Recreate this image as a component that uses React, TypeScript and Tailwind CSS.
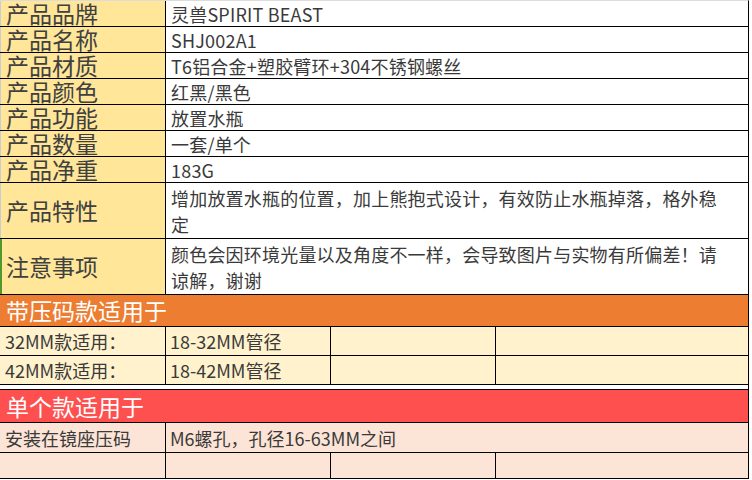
import React from 'react';

const info: [string, React.ReactNode, string][] = [
  ['产品品牌', '灵兽SPIRIT BEAST', 'h-[26px]'],
  ['产品名称', 'SHJ002A1', 'h-[26px]'],
  ['产品材质', 'T6铝合金+塑胶臂环+304不锈钢螺丝', 'h-[26px]'],
  ['产品颜色', '红黑/黑色', 'h-[26px]'],
  ['产品功能', '放置水瓶', 'h-[26px]'],
  ['产品数量', '一套/单个', 'h-[26px]'],
  ['产品净重', '183G', 'h-[26px]'],
  [
    '产品特性',
    <>增加放置水瓶的位置，加上熊抱式设计，有效防止水瓶掉落，格外稳<br />定</>,
    'h-[56px]',
  ],
];

function SubRow({ a, b, h, bg, merged }: { a: string; b: string; h: string; bg: string; merged?: boolean }) {
  return (
    <div className={`flex ${h} ${bg} border-b border-black text-[18px] leading-none text-[#3a3a3a]`}>
      <div className="w-[166px] shrink-0 border-r border-black flex items-center pl-[5px]">{a}</div>
      {merged ? (
        <div className="flex-1 flex items-center pl-[4px]">{b}</div>
      ) : (
        <>
          <div className="w-[165px] shrink-0 border-r border-black flex items-center pl-[4px]">{b}</div>
          <div className="w-[165px] shrink-0 border-r border-black" />
          <div className="flex-1" />
        </>
      )}
    </div>
  );
}

export default function App() {
  return (
    <div className="w-[752px] h-[480px] bg-white overflow-hidden font-['Noto_Sans_CJK_SC','Noto_Sans',sans-serif]">
      <div className="w-[749px] border-t border-t-[#dcdcdc] border-r border-r-black">
        {info.map(([label, value, h]) => (
          <div key={label} className={`flex ${h} border-b border-black`}>
            <div className="w-[166px] shrink-0 bg-[#ffe699] border-l border-l-[#c8ccd4] border-r border-r-black flex items-center pl-[5px] text-[23px] leading-none text-[#404040]">
              {label}
            </div>
            <div className="flex-1 flex items-center pl-[5px] text-[18px] leading-[26px] tracking-[0.2px] text-[#3a3a3a]">{value}</div>
          </div>
        ))}
        <div className="flex h-[56px] border-b border-black">
          <div className="w-[166px] shrink-0 bg-[#ffe699] border-l-2 border-l-[#4f9a2a] border-r border-r-black flex items-center pl-[4px] text-[23px] leading-none text-[#404040]">
            注意事项
          </div>
          <div className="flex-1 flex items-center pl-[5px] text-[18px] leading-[26px] tracking-[0.2px] text-[#3a3a3a]">
            <span>
              颜色会因环境光量以及角度不一样，会导致图片与实物有所偏差！请
              <br />
              谅解，谢谢
            </span>
          </div>
        </div>

        <div className="h-[32px] bg-[#ed7d31] border-b border-black flex items-center pl-[6px] text-[23px] leading-none text-white">
          带压码款适用于
        </div>
        <SubRow a="32MM款适用：" b="18-32MM管径" h="h-[29px]" bg="bg-[#fff2cc]" />
        <SubRow a="42MM款适用：" b="18-42MM管径" h="h-[29px]" bg="bg-[#fff2cc]" />

        <div className="h-[4px] bg-white" />

        <div className="h-[34px] bg-[#ff5050] border-t border-b border-black flex items-center pl-[6px] text-[23px] leading-none text-white">
          单个款适用于
        </div>
        <SubRow a="安装在镜座压码" b="M6螺孔，孔径16-63MM之间" h="h-[30px]" bg="bg-[#fce4d6]" merged />
        <SubRow a="" b="" h="h-[26px]" bg="bg-[#fce4d6]" />
      </div>
    </div>
  );
}
